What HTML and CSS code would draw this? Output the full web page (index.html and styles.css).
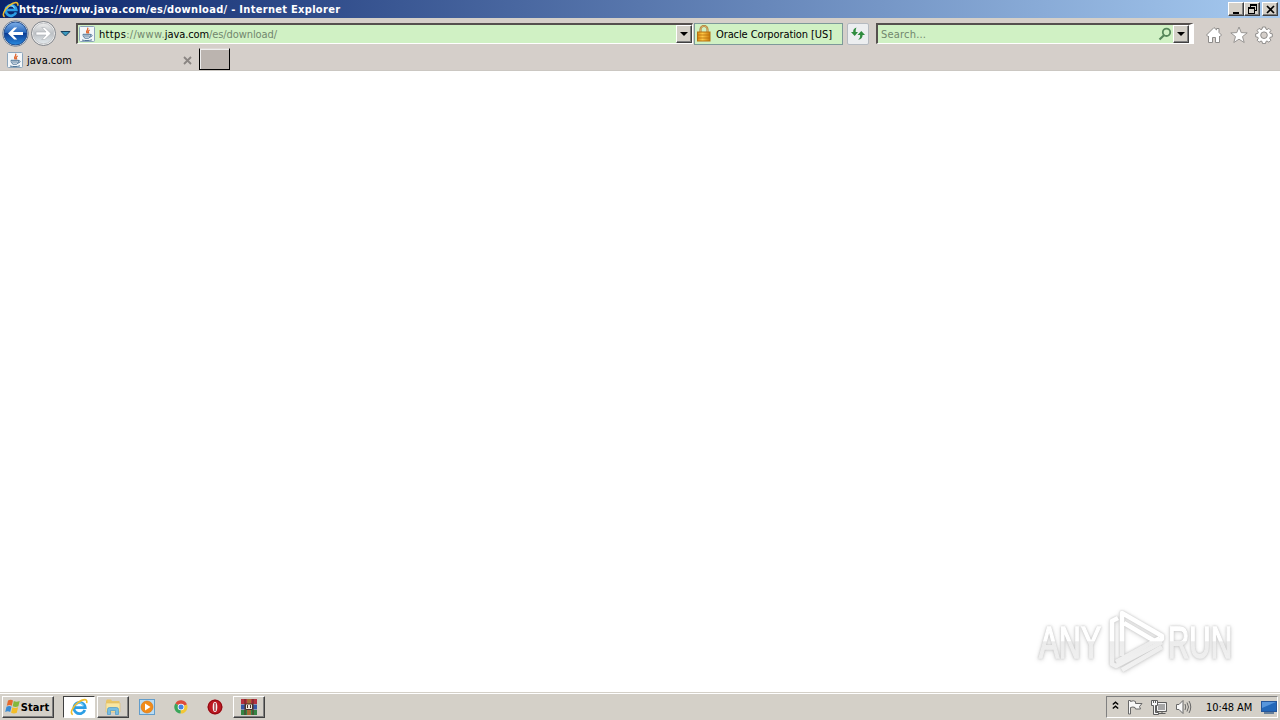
FILE: index.html
```html
<!DOCTYPE html>
<html lang="en">
<head>
  <meta charset="UTF-8" />
  <title>https://www.java.com/es/download/ - Internet Explorer</title>
  <link rel="stylesheet" href="styles.css">
</head>
<body>

  <!-- shared icons -->
  <svg class="defs" width="0" height="0">
    <defs>
      <linearGradient id="blue" x1="0" y1="0" x2="0" y2="1">
        <stop offset="0" stop-color="#7fb0e8"/><stop offset=".45" stop-color="#2868bd"/>
        <stop offset=".5" stop-color="#0d3d94"/><stop offset="1" stop-color="#298be0"/>
      </linearGradient>
      <linearGradient id="silver" x1="0" y1="0" x2="0" y2="1">
        <stop offset="0" stop-color="#eeeeee"/><stop offset=".5" stop-color="#bcc0c4"/><stop offset="1" stop-color="#e4eaee"/>
      </linearGradient>
      <linearGradient id="gold" x1="0" y1="0" x2="1" y2="0">
        <stop offset="0" stop-color="#d98b12"/><stop offset=".4" stop-color="#ffc847"/><stop offset="1" stop-color="#c9790b"/>
      </linearGradient>
      <symbol id="ie" viewBox="0 0 16 16">
        <path d="M13.2 10.700A5 5 0 1 1 13.500 8.500H4.800" fill="none" stroke="#2c9ee5" stroke-width="2.500"/>
        <path d="M4.600 7.200a3.700 3.700 0 0 1 7.200 0" fill="none" stroke="#7bd0f7" stroke-width="1"/>
        <path d="M2.500 14.800C-.4 13.500 2.300 7.600 7 4.200 11.600.8 15.800.2 14.800 4.500" fill="none" stroke="#f1bd2d" stroke-width="1.400"/>
      </symbol>
      <symbol id="java" viewBox="0 0 16 16">
        <rect x=".5" y=".5" width="15" height="15" rx="1" fill="#f3f7fa" stroke="#8ca5bb"/>
        <path d="M8.500 1.800c2 2-3 3 0 5.700M10.700 4c-2 1-1.800 2-.8 3.400" fill="none" stroke="#e0642c" stroke-width="1.300"/>
        <path d="M4 8.300h7.500c0 2-.8 3.500-2 3.900H6C4.700 11.500 4 10 4 8.300zM3 14c3 .8 7 .8 10-.2M11.500 8.800c2.600-.4 2 2-.8 2.300" fill="none" stroke="#4d7396"/>
        <path d="M5 10h5.500" stroke="#4d7396"/>
      </symbol>
    </defs>
  </svg>

  <div class="titlebar">
    <svg class="title-icon" width="17" height="17"><use href="#ie"/></svg>
    <span class="title-text">https://www.java.com/es/download/ - Internet Explorer</span>
    <div class="window-buttons">
      <button class="win-btn"><svg width="13" height="11"><path d="M3 8h6v2H3z"/></svg></button>
      <button class="win-btn"><svg width="13" height="11"><path d="M4 0h7v7H9V6h1V2H5v1H4zM2 3h7v7H2zM3 5v4h5V5z" fill-rule="evenodd"/></svg></button>
      <button class="win-btn close"><svg width="13" height="11"><path d="M3 2l7 7M10 2L3 9" stroke="#000" stroke-width="1.700"/></svg></button>
    </div>
  </div>

  <div class="toolbar">
    <svg class="nav" width="76" height="30">
      <circle cx="15.500" cy="15.500" r="12.800" fill="#f5f8fb" stroke="#6d7c90"/>
      <circle cx="15.500" cy="15.500" r="11.500" fill="url(#blue)" stroke="#234f91"/>
      <path d="M8 15.500l6.200-6h3L13 14h10v3H13l4.200 4.500h-3z" fill="#fff"/>
      <circle cx="43.500" cy="15.500" r="12" fill="#f4f4f4" stroke="#7d8187"/>
      <circle cx="43.500" cy="15.500" r="10.300" fill="url(#silver)" stroke="#c4c6c9"/>
      <path d="M51 15.500l-6.200-6h-3L46 14H36v3h10l-4.200 4.500h3z" fill="#fff" stroke="#a9adb2" stroke-width=".6"/>
      <path d="M61 13.500h9L65.500 18z" fill="#3b9ac0" stroke="#173f5c"/>
    </svg>
    <div class="field address">
      <svg class="favicon" width="16" height="16"><use href="#java"/></svg>
      <span class="url"><span class="scheme"><b>https</b>://www.</span><b>java.com</b>/es/download/</span>
      <button class="drop"><svg width="8" height="4"><path d="M0 0h8L4 4z"/></svg></button>
    </div>
    <div class="cert">
      <svg width="16" height="18">
        <path d="M4.500 8V4.500a3.500 3.500 0 0 1 7 0V8" fill="none" stroke="#a9752b" stroke-width="2"/>
        <path d="M4.500 8V4.500a3.500 3.500 0 0 1 7 0V8" fill="none" stroke="#e8c582" stroke-width=".7"/>
        <rect x="1.500" y="7" width="12.500" height="9" fill="url(#gold)" stroke="#b57210"/>
        <path d="M2 10h12M2 13h12" stroke="#b96e0b" stroke-width=".8"/>
      </svg>
      <span>Oracle Corporation [US]</span>
    </div>
    <button class="refresh">
      <svg width="16" height="16"><path d="M6.500 1.500C4 2 3 4 3.200 6H1l3.700 4L8 6H5.700c-.1-2 .2-3 .8-4.500zM11.300 5L7.500 9h2.600c.2 2-.4 3.500-2 4.700 3-.4 4.500-2.200 4.500-4.700H15z" fill="#2f8c3e"/></svg>
    </button>
    <div class="field search">
      <span class="placeholder">Search...</span>
      <svg width="14" height="14"><circle cx="8.500" cy="5.300" r="3.700" fill="none" stroke="#56875a" stroke-width="1.800"/><path d="M6 8.200L1.500 12.500" stroke="#56875a" stroke-width="2.200"/></svg>
      <button class="drop"><svg width="8" height="4"><path d="M0 0h8L4 4z"/></svg></button>
    </div>
    <div class="commands">
      <svg width="18" height="18"><path d="M1.500 9L9 1.500l2.500 2.400V2.500h2.500v4L16.500 9 15 10.500l-.5-.5v6.500h-4v-5h-3v5h-4V10l-.5.5z" fill="#fff" stroke="#8e8c8a"/></svg>
      <svg width="18" height="18"><path d="M9 1l2.200 5.600 6 .3-4.700 3.700 1.700 5.900L9 13.200l-5.200 3.300 1.700-5.900L.8 6.900l6-.3z" fill="#fff" stroke="#8e8c8a" stroke-width=".9"/></svg>
      <svg width="18" height="18">
        <path d="M7.500 1h3l.5 2.200 1 .4 1.900-1.200 2 2-1.200 1.900.4 1 2.200.5v3l-2.200.5-.4 1 1.200 1.900-2 2-1.900-1.200-1 .4-.5 2.200h-3L7 15.400l-1-.4-1.900 1.200-2-2 1.200-1.900-.4-1-2.200-.5v-3l2.200-.5.4-1-1.200-1.900 2-2L6 3.600l1-.4z" fill="#fff" stroke="#8e8c8a"/>
        <circle cx="9" cy="9.200" r="3.300" fill="#d5cfca" stroke="#8e8c8a"/>
      </svg>
    </div>
  </div>

  <div class="tabs">
    <div class="tab">
      <svg class="favicon" width="16" height="16"><use href="#java"/></svg>
      <span>java.com</span>
      <svg class="tab-close" width="9" height="9"><path d="M1 1l7 7M8 1L1 8" stroke="#8a8582" stroke-width="1.800"/></svg>
    </div>
    <div class="new-tab"></div>
  </div>

  <div class="page">
    <svg class="watermark" width="220" height="70" viewBox="0 0 220 70">
      <defs>
        <linearGradient id="fade" gradientUnits="userSpaceOnUse" x1="0" y1="0" x2="0" y2="70">
          <stop offset="0" stop-color="#fff"/><stop offset=".5" stop-color="#fff"/>
          <stop offset=".51" stop-color="#ececec"/><stop offset="1" stop-color="#f3f3f3"/>
        </linearGradient>
      </defs>
      <g fill="url(#fade)" stroke="url(#fade)" stroke-width="1.500">
        <text x="9" y="52" textLength="62" lengthAdjust="spacingAndGlyphs">ANY</text>
        <text x="138" y="52" textLength="64" lengthAdjust="spacingAndGlyphs">RUN</text>
      </g>
      <g fill="none" stroke="url(#fade)" stroke-width="4.500" stroke-linejoin="round">
        <path d="M88 12l-6 3v43l4 2 46-24"/>
        <path d="M92 50V7l40 23v3l-4 4-34-20"/>
        <path d="M92 64l40-23M86 56l44-24"/>
      </g>
    </svg>
  </div>

  <div class="taskbar">
    <button class="start">
      <svg width="17" height="16">
        <path d="M4 1.500c2-1 3.500-1 5 0L7.800 6.800c-1.500-1-3-.9-5 0z" fill="#e66a2c"/>
        <path d="M9.800 2c1.800 1 3.500 1 5.900 0l-1.300 5.300c-2 1-3.800 1-5.700 0z" fill="#83b83c"/>
        <path d="M2.500 7.700c2-1 3.500-1 5 0l-1.300 5.400c-1.500-1-3.200-1-5 0z" fill="#398bd4"/>
        <path d="M8.400 8.300c1.700 1 3.500 1 5.700 0l-1.300 5.400c-2 1-3.700 1-5.700 0z" fill="#f3bd28"/>
      </svg>
      <span>Start</span>
    </button>
    <div class="tasks">
      <div class="task active"><svg width="18" height="18"><use href="#ie"/></svg></div>
      <div class="task raised">
        <svg width="18" height="18">
          <path d="M2 3l1-1.500h4L8 3h7.500v11H2z" fill="#e9c566"/><path d="M2 5h14v9H2z" fill="#f8e6a2" stroke="#dfbd65" stroke-width=".6"/>
          <path d="M3.500 16.500v-5q0-2 2-2h7q2 0 2 2v5h-3v-4h-5v4z" fill="#75bde2" stroke="#4d98c7" stroke-width=".7"/>
        </svg>
      </div>
      <div class="task">
        <svg width="18" height="18"><rect x="1.500" y="1.500" width="15" height="15" fill="#b9dcf4" stroke="#629dcb"/><circle cx="9" cy="9" r="6" fill="#f18b19" stroke="#d8720d" stroke-width=".6"/><path d="M7 5.500v7L12.500 9z" fill="#fff"/></svg>
      </div>
      <div class="task">
        <svg width="16" height="16">
          <path d="M8 8L2.400 4.400A6.500 6.500 0 0 1 14 5.500z" fill="#dd4c3c"/>
          <path d="M8 8l6-2.500A6.500 6.500 0 0 1 7.500 14.500z" fill="#f2c735"/>
          <path d="M8 8l-.5 6.500A6.500 6.500 0 0 1 2.400 4.400z" fill="#3ba65a"/>
          <circle cx="8" cy="8" r="3.300" fill="#fff"/><circle cx="8" cy="8" r="2.500" fill="#4382e2"/>
        </svg>
      </div>
      <div class="task">
        <svg width="16" height="16"><circle cx="8" cy="8" r="7.500" fill="#bd1720"/><circle cx="8" cy="8" r="6.800" fill="none" stroke="#8b0c14"/><ellipse cx="8" cy="8" rx="2.300" ry="5" fill="#f5eeee"/><path d="M8 4v8" stroke="#8b0c14" stroke-width="1.200"/></svg>
      </div>
      <div class="task raised">
        <svg width="18" height="16">
          <path d="M1 0h16v5H1z" fill="#b52f3e"/><path d="M1 5.500h16v5H1z" fill="#3657a5"/><path d="M1 11h16v5H1z" fill="#348544"/>
          <path d="M5 0v16M13 0v16" stroke="#5b2b25"/><path d="M7 0h4v16H7z" fill="#a66a35"/>
          <path d="M5.500 5h7v5.500h-7z" fill="#eee6dc" stroke="#49352b"/><path d="M7.500 6v3M10.500 6v3" stroke="#49352b"/>
        </svg>
      </div>
    </div>
    <div class="tray">
      <svg class="chevron" width="7" height="9"><path d="M.8 3.500l2.700-2.300 2.700 2.300M.8 7.500l2.700-2.300 2.700 2.300" fill="none" stroke="#000" stroke-width="1.400"/></svg>
      <svg class="flag" width="17" height="16"><path d="M1.500 15V1.500h2v1q3-1.500 5 0v2h6.500l-2.500 3 1 2.500h-5l-.5-1.500q-2-1-4.500 0V15z" fill="#f8f8f8" stroke="#686868"/></svg>
      <svg class="network" width="17" height="16"><path d="M5.500 3.500h10v9h-10z" fill="#a6a6a6" stroke="#5d5d5d"/><path d="M6.500 4.500h8v7h-8z" fill="none" stroke="#f5f5f5"/><path d="M7.500 14.500h7M11 13v1.500" stroke="#5d5d5d"/><path d="M.5 1.500h6v5h-2v7h3v2h-5v-9h-2z" fill="#f8f8f8" stroke="#5d5d5d"/><path d="M2.500 1v3M4.500 1v3" stroke="#5d5d5d"/></svg>
      <svg class="sound" width="17" height="16"><path d="M1.500 5.500h2.500l4-4v13l-4-4H1.500z" fill="#f8f8f8" stroke="#686868"/><path d="M10 5q1.500 3 0 6M12 3.500q3 4.500 0 9M14 2q3.500 6 0 12" fill="none" stroke="#666" stroke-width="1"/></svg>
      <span class="clock">10:48 AM</span>
      <svg class="desktop" width="16" height="16"><rect x=".5" y="2.500" width="15" height="10" fill="#2368b9" stroke="#25569a"/><path d="M1 3h14L1 9z" fill="#5796dc"/><path d="M3 14h10" stroke="#40658c" stroke-width="1.500"/></svg>
    </div>
  </div>

</body>
</html>
```
FILE: styles.css
```css
* {
  box-sizing: border-box;
}

body {
  margin: 0;
  width: 1280px;
  height: 720px;
  overflow: hidden;
  display: flex;
  flex-direction: column;
  background: #d4d0c8;
  color: #000;
  font: 11px "DejaVu Sans Condensed", "DejaVu Sans", sans-serif;
  font-stretch: condensed;
}

.defs {
  position: absolute;
}

svg {
  display: block;
  flex: none;
}

button {
  padding: 0;
  border: 1px solid;
  border-color: #fff #404040 #404040 #fff;
  background: #d4d0c8;
  color: #000;
  font: inherit;
  display: flex;
  align-items: center;
  justify-content: center;
}

span {
  white-space: nowrap;
}

.titlebar {
  height: 18px;
  flex: none;
  display: flex;
  align-items: center;
  padding: 0 2px;
  background: linear-gradient(to right, #0a246a, #a6caf0);
}

.title-text {
  color: #fff;
  font-weight: bold;
  letter-spacing: 0.3px;
}

.window-buttons {
  display: flex;
  margin-left: auto;
}

.win-btn {
  width: 16px;
  height: 14px;
  box-shadow: inset -1px -1px #808080;
}

.close {
  margin-left: 2px;
}

.toolbar {
  height: 30px;
  flex: none;
  display: flex;
  background: #d5cfca;
  border-top: 1px solid #d4d0c8;
}

.nav {
  margin-top: -1px;
}

.field {
  height: 21px;
  margin-top: 4px;
  display: flex;
  align-items: center;
  background: #d0f1c4;
  border: 2px solid;
  border-color: #55504e #fff #fff #55504e;
  border-right-width: 1px;
  border-bottom-width: 1px;
}

.address {
  width: 617px;
  padding-left: 1px;
}

.url {
  margin-left: 4px;
  color: #71866d;
  letter-spacing: -0.1px;
}

.scheme {
  letter-spacing: 0.33px;
}

.url b {
  color: #000;
  font-weight: normal;
}

.drop {
  width: 16px;
  height: 18px;
  margin-left: auto;
  box-shadow: inset -1px -1px #808080;
}

.cert {
  width: 149px;
  height: 22px;
  margin: 4px 0 0 1px;
  padding-left: 1px;
  display: flex;
  align-items: center;
  gap: 4px;
  background: #d0f1c4;
  border: 1px solid #7d9999;
  letter-spacing: -0.1px;
}

.refresh {
  width: 22px;
  height: 22px;
  margin: 4px 0 0 4px;
  background: #eceef0;
  border-color: #b5bac0;
  border-radius: 2px;
}

.search {
  width: 318px;
  margin-left: 7px;
  padding-left: 3px;
  border-right-width: 5px;
}

.search svg {
  margin-left: auto;
}

.search .drop,
.search .drop svg {
  margin: 0;
}

.search .drop {
  margin-left: 1px;
}

.placeholder {
  color: #71866d;
  letter-spacing: 0.2px;
}

.commands {
  display: flex;
  gap: 7px;
  margin: 7px 0 0 11px;
}

.tabs {
  height: 23px;
  flex: none;
  display: flex;
  background: #d5cfca;
  border-bottom: 1px solid #cbc7c2;
}

.tab {
  width: 199px;
  display: flex;
  align-items: center;
  padding: 2px 7px 0;
  gap: 4px;
}

.tab-close {
  margin-left: auto;
}

.new-tab {
  width: 31px;
  height: 22px;
  background: #bbb4af;
  border: 1px solid #000;
  border-top-color: #ded9d5;
  box-shadow: inset 1px 1px #eee;
}

.page {
  flex: 1;
  background: #fff;
  position: relative;
}

.watermark {
  position: absolute;
  left: 1030px;
  top: 535px;
  filter: drop-shadow(0 0 1px #c4c4c4) drop-shadow(0 1px 2px #ddd);
}

.watermark text {
  font: 45px "Liberation Sans Narrow", "Liberation Sans", sans-serif;
}

.taskbar {
  height: 28px;
  flex: none;
  display: flex;
  align-items: center;
  padding: 1px 2px 0;
  background: #d4d0c8;
  border-top: 1px solid #d4d0c8;
  box-shadow: inset 0 1px #fff;
}

.start {
  width: 52px;
  height: 22px;
  padding-right: 3px;
  font-weight: bold;
  letter-spacing: 0.1px;
  box-shadow: inset -1px -1px #808080;
}

.tasks {
  display: flex;
  margin-left: 9px;
  gap: 2px;
}

.task {
  width: 32px;
  height: 22px;
  display: flex;
  align-items: center;
  justify-content: center;
}

.raised {
  border: 1px solid;
  border-color: #fff #404040 #404040 #fff;
  box-shadow: inset -1px -1px #808080;
}

.active {
  background: #fff;
  border: 1px solid;
  border-color: #404040 #fff #fff #404040;
}

.tray {
  width: 172px;
  height: 22px;
  margin-left: auto;
  padding-left: 5px;
  display: flex;
  align-items: center;
  border: 1px solid;
  border-color: #808080 #fff #fff #808080;
}

.chevron {
  margin-bottom: 3px;
}

.flag {
  margin-left: 8px;
}

.network,
.sound {
  margin-left: 7px;
}

.clock {
  margin-left: 14px;
  letter-spacing: -0.1px;
}

.desktop {
  margin-left: auto;
}
```
